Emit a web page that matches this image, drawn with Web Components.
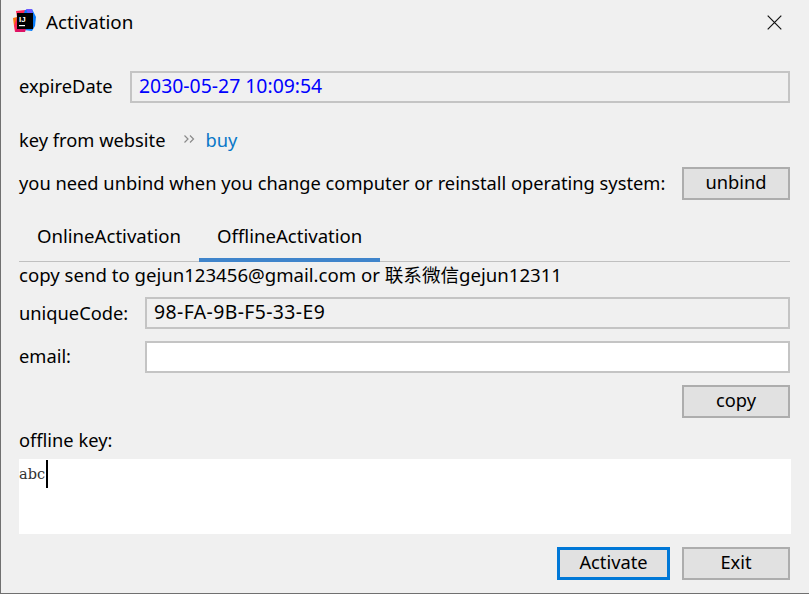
<!DOCTYPE html>
<html lang="en">
<head>
<meta charset="utf-8">
<title>Activation</title>
<style>
  html, body { margin: 0; height: 100%; background: #f0f0f0; }
  body { font: 18.3px "Noto Sans", "Noto Sans CJK SC", sans-serif; color: #000; }
  form-row > span { margin-bottom: 2px; }
</style>
</head>
<body>
<activation-window>
  <title-bar slot="top">Activation</title-bar>

  <form-row top="27" height="32" gap="0">
    <span style="width:111px;margin-bottom:4px">expireDate</span>
    <text-field style="--fg:#0000ff;--bg:#f0f0f0;font-size:19.4px;padding-bottom:4px">2030-05-27 10:09:54</text-field>
  </form-row>

  <form-row top="21" height="32" gap="18">
    <span>key from website</span>
    <span style="display:flex;align-items:center;gap:10px">
      <svg width="12" height="10" viewBox="0 0 12 10" fill="none" stroke="#8a8a8a" stroke-width="1.2"><path d="M1.5 1.5 5 5 1.5 8.5M7 1.5 10.5 5 7 8.5"/></svg>
      <span style="color:#0a78c8">buy</span>
    </span>
  </form-row>

  <form-row top="11" height="32" gap="16">
    <span style="flex:1">you need unbind when you change computer or reinstall operating system:</span>
    <push-button>unbind</push-button>
  </form-row>

  <tab-bar>
    <tab-item>OnlineActivation</tab-item>
    <tab-item active>OfflineActivation</tab-item>
  </tab-bar>

  <form-row top="0" height="27" gap="0" style="font-size:18.6px">
    <span style="margin-bottom:5px">copy send to gejun123456@gmail.com or 联系微信gejun12311</span>
  </form-row>

  <form-row top="8" height="32" gap="0">
    <span style="width:126px">uniqueCode:</span>
    <text-field style="--bg:#f0f0f0;font-size:19.4px;letter-spacing:.4px;padding-bottom:4px">98-FA-9B-F5-33-E9</text-field>
  </form-row>

  <form-row top="12" height="32" gap="0">
    <span style="width:126px;margin-bottom:4px">email:</span>
    <text-field style="--bg:#fff"></text-field>
  </form-row>

  <form-row top="12" height="32" gap="0" style="justify-content:flex-end">
    <push-button>copy</push-button>
  </form-row>

  <form-row top="8" height="30" gap="0">
    <span>offline key:</span>
  </form-row>

  <key-area top="4">abc</key-area>

  <form-row top="13" height="33" gap="12" style="justify-content:flex-end">
    <push-button focused>Activate</push-button>
    <push-button>Exit</push-button>
  </form-row>
</activation-window>

<script>
// ventana principal
class ActivationWindow extends HTMLElement {
  constructor(){
    super();
    this.attachShadow({mode:'open'}).innerHTML = `
      <style>
        :host{
          display: block;
          box-sizing: border-box;
          width: 809px;
          height: 594px;
          background: #f0f0f0;
          border-left: 1px solid #707070;
          border-bottom: 1px solid #707070;
          overflow: hidden;
        }
        .body{ padding: 0 19px 0 18px; }
      </style>
      <slot name="top"></slot>
      <div class="body"><slot></slot></div>
    `;
  }
}

class TitleBar extends HTMLElement {
  constructor(){
    super();
    this.attachShadow({mode:'open'}).innerHTML = `
      <style>
        :host{
          display: flex;
          align-items: center;
          height: 44px;
          padding: 0 27px 0 11px;
          font-size: 18.8px;
        }
        .logo{ flex: none; margin: -2px 10px 0 0; }
        .title{ flex: 1; }
        .close{ display: block; }
      </style>
      <svg class="logo" width="24" height="24" viewBox="0 0 24 24">
        <path d="M1 9 5 8 5 17 2 17Z" fill="#f97a12"/>
        <path d="M4 2 13 1 13 5 5 5 5 22 3 23 2 17 5 8Z" fill="#fe2857"/>
        <path d="M13 1 20 0 24 8 23 17 20 22 12 21 12 4Z" fill="#087cfa"/>
        <path d="M14 0 20 0 21 5 16 5Z" fill="#6b57ff"/>
        <path d="M3 23 5 19 14 20 13 23Z" fill="#dd1265"/>
        <rect x="5" y="4" width="16" height="16" fill="#000"/>
        <text x="7" y="12.5" font-family="Liberation Sans, sans-serif" font-size="8" font-weight="700" fill="#fff">IJ</text>
        <rect x="7" y="16" width="6" height="1.2" fill="#fff"/>
      </svg>
      <span class="title"><slot></slot></span>
      <svg class="close" width="15" height="15" viewBox="0 0 15 15" stroke="#111" stroke-width="1.2">
        <path d="M.7 .7 14.3 14.3M14.3 .7 .7 14.3"/>
      </svg>
    `;
  }
}

class FormRow extends HTMLElement {
  constructor(){
    super();
    this.attachShadow({mode:'open'}).innerHTML = `
      <style>
        :host{
          display: flex;
          align-items: center;
          white-space: nowrap;
        }
      </style>
      <slot></slot>
    `;
  }
  connectedCallback(){
    this.style.marginTop = this.getAttribute('top') + 'px';
    this.style.height = this.getAttribute('height') + 'px';
    this.style.gap = this.getAttribute('gap') + 'px';
  }
}

class TextField extends HTMLElement {
  constructor(){
    super();
    this.attachShadow({mode:'open'}).innerHTML = `
      <style>
        :host{
          display: flex;
          align-items: center;
          flex: 1;
          box-sizing: border-box;
          height: 32px;
          padding: 0 7px 2px;
          border: 2px solid #c4c4c4;
          background: var(--bg, #fff);
          color: var(--fg, #000);
        }
      </style>
      <slot></slot>
    `;
  }
}

class PushButton extends HTMLElement {
  constructor(){
    super();
    this.attachShadow({mode:'open'}).innerHTML = `
      <style>
        :host{
          display: flex;
          align-items: center;
          justify-content: center;
          flex: none;
          box-sizing: border-box;
          width: 108px;
          height: 33px;
          padding-bottom: 4px;
          border: 2px solid #adadad;
          background: #e1e1e1;
        }
        :host([focused]){
          width: 113px;
          border: 3px solid #0078d7;
        }
      </style>
      <slot></slot>
    `;
  }
}

class TabBar extends HTMLElement {
  constructor(){
    super();
    this.attachShadow({mode:'open'}).innerHTML = `
      <style>
        :host{
          display: flex;
          margin-top: 20px;
          height: 43px;
          box-sizing: border-box;
          border-bottom: 1px solid #c0c0c0;
          font-size: 18.6px;
        }
      </style>
      <slot></slot>
    `;
  }
}

class TabItem extends HTMLElement {
  constructor(){
    super();
    this.attachShadow({mode:'open'}).innerHTML = `
      <style>
        :host{
          display: flex;
          align-items: flex-start;
          box-sizing: border-box;
          height: 43px;
          padding: 4px 18px 0;
          white-space: nowrap;
        }
        :host([active]){
          border-bottom: 4px solid #3f84cb;
        }
      </style>
      <slot></slot>
    `;
  }
}

class KeyArea extends HTMLElement {
  constructor(){
    super();
    this.attachShadow({mode:'open'}).innerHTML = `
      <style>
        :host{
          display: block;
          height: 75px;
          margin-right: -1px;
          background: #fff;
          font: 14.5px "DejaVu Serif", serif;
        }
        .line{ display: flex; align-items: center; height: 29px; color: #333; }
        .caret{ width: 1.5px; height: 28px; margin-left: 1px; background: #000; }
      </style>
      <div class="line"><slot></slot><span class="caret"></span></div>
    `;
  }
  connectedCallback(){
    this.style.marginTop = this.getAttribute('top') + 'px';
  }
}

customElements.define('activation-window', ActivationWindow);
customElements.define('title-bar', TitleBar);
customElements.define('form-row', FormRow);
customElements.define('text-field', TextField);
customElements.define('push-button', PushButton);
customElements.define('tab-bar', TabBar);
customElements.define('tab-item', TabItem);
customElements.define('key-area', KeyArea);
</script>
</body>
</html>
